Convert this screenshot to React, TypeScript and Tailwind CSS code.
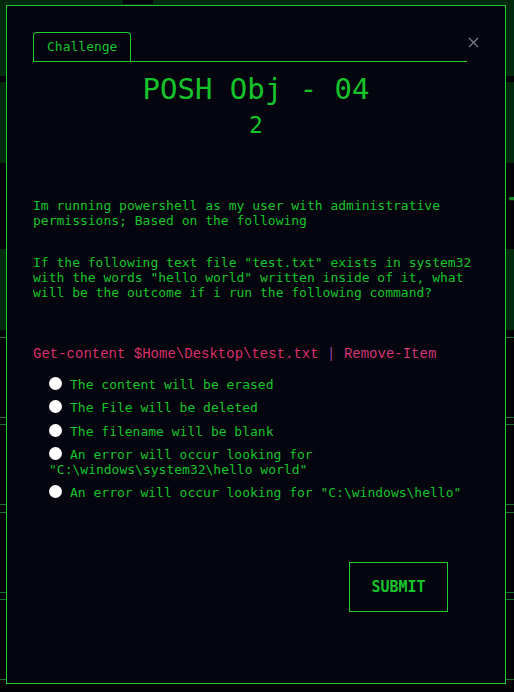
import React from "react";

const mono = { fontFamily: '"DejaVu Sans Mono", "Liberation Mono", monospace' };

export default function App() {
  const options = [
    "The content will be erased",
    "The File will be deleted",
    "The filename will be blank",
    'An error will occur looking for "C:\\windows\\system32\\hello world"',
    'An error will occur looking for "C:\\windows\\hello"',
  ];
  return (
    <div className="relative w-[514px] h-[692px] overflow-hidden bg-[#020205]" style={mono}>
      {/* background page */}
      <div className="flex flex-col">
        <div className="h-[76px] bg-[#012a0c] flex items-start">
          <div className="ml-[123px] w-[30px] h-[4px] bg-[#020205]" />
        </div>
        <div className="h-[6px]" />
        <div className="h-[81px] bg-[#012a0c]" />
        <div className="h-[86px] flex justify-end items-center">
          <span className="text-[46px] leading-none text-[#178a2a] mr-[-20px]">t</span>
        </div>
        <div className="h-[81px] bg-[#012a0c]" />
        <div className="h-[7px]" />
        <div className="h-[80px] border-t border-[#16702a]" />
        <div className="h-[7px] border-t border-[#16702a]" />
        <div className="h-[80px] border-t border-[#16702a]" />
        <div className="h-[8px] border-t border-[#16702a]" />
        <div className="h-[80px] border-t border-[#16702a]" />
        <div className="h-[7px] border-t border-[#16702a]" />
        <div className="h-[80px] border-t border-[#16702a]" />
        <div className="h-[13px] border-t border-[#16702a]" />
      </div>

      {/* modal */}
      <div className="absolute left-[6px] top-[5px] w-[500px] h-[679px] border border-[#1fcc2e] bg-[#05050f] px-[26px] pt-[26px] text-[#17c32b]">
        <div className="flex items-start">
          <div className="flex-1 border-b border-[#1fcc2e] flex">
            <div className="h-[29px] px-[13px] border-t border-l border-r border-[#1fcc2e] rounded-t-[4px] text-[13px] leading-[27px]">
              Challenge
            </div>
          </div>
          <svg className="ml-[1px] mt-[5px]" width="11" height="11" viewBox="0 0 11 11">
            <path d="M1 1 L10 10 M10 1 L1 10" stroke="#7d8494" strokeWidth="1.1" fill="none" />
          </svg>
        </div>

        <div className="mt-[10px] text-center text-[29px] leading-[35px]">POSH Obj - 04</div>
        <div className="mt-[4px] text-center text-[23px] leading-[28px]">2</div>

        <p className="mt-[59px] text-[13px] leading-[15px]">
          Im running powershell as my user with administrative permissions; Based on the following
        </p>
        <p className="mt-[27px] text-[13px] leading-[15px]">
          If the following text file "test.txt" exists in system32 with the words "hello world" written inside of it, what will be the outcome if i run the following command?
        </p>

        <div
          className="mt-[46px] text-[14px] leading-[16px] text-[#d9306c]"
          style={{ fontFamily: '"Liberation Mono", monospace' }}
        >
          Get-content $Home\Desktop\test.txt <span className="text-[#9b3fa8]">|</span>{" "}
          <span className="text-[#d23678]">Remove-Item</span>
        </div>

        <div className="mt-[15px] pl-[16px] flex flex-col gap-[8.3px]">
          {options.map((o) => (
            <div key={o} className="text-[13px] leading-[15px]">
              <span className="inline-block w-[13px] h-[13px] rounded-full bg-white mr-[8px] align-[-1px]" />
              {o}
            </div>
          ))}
        </div>

        <div className="mt-[62px] flex justify-end pr-[31px]">
          <button className="w-[99px] h-[50px] border border-[#1fcc2e] text-[15px] font-bold text-[#17c32b] bg-transparent" style={mono}>
            SUBMIT
          </button>
        </div>
      </div>
    </div>
  );
}
